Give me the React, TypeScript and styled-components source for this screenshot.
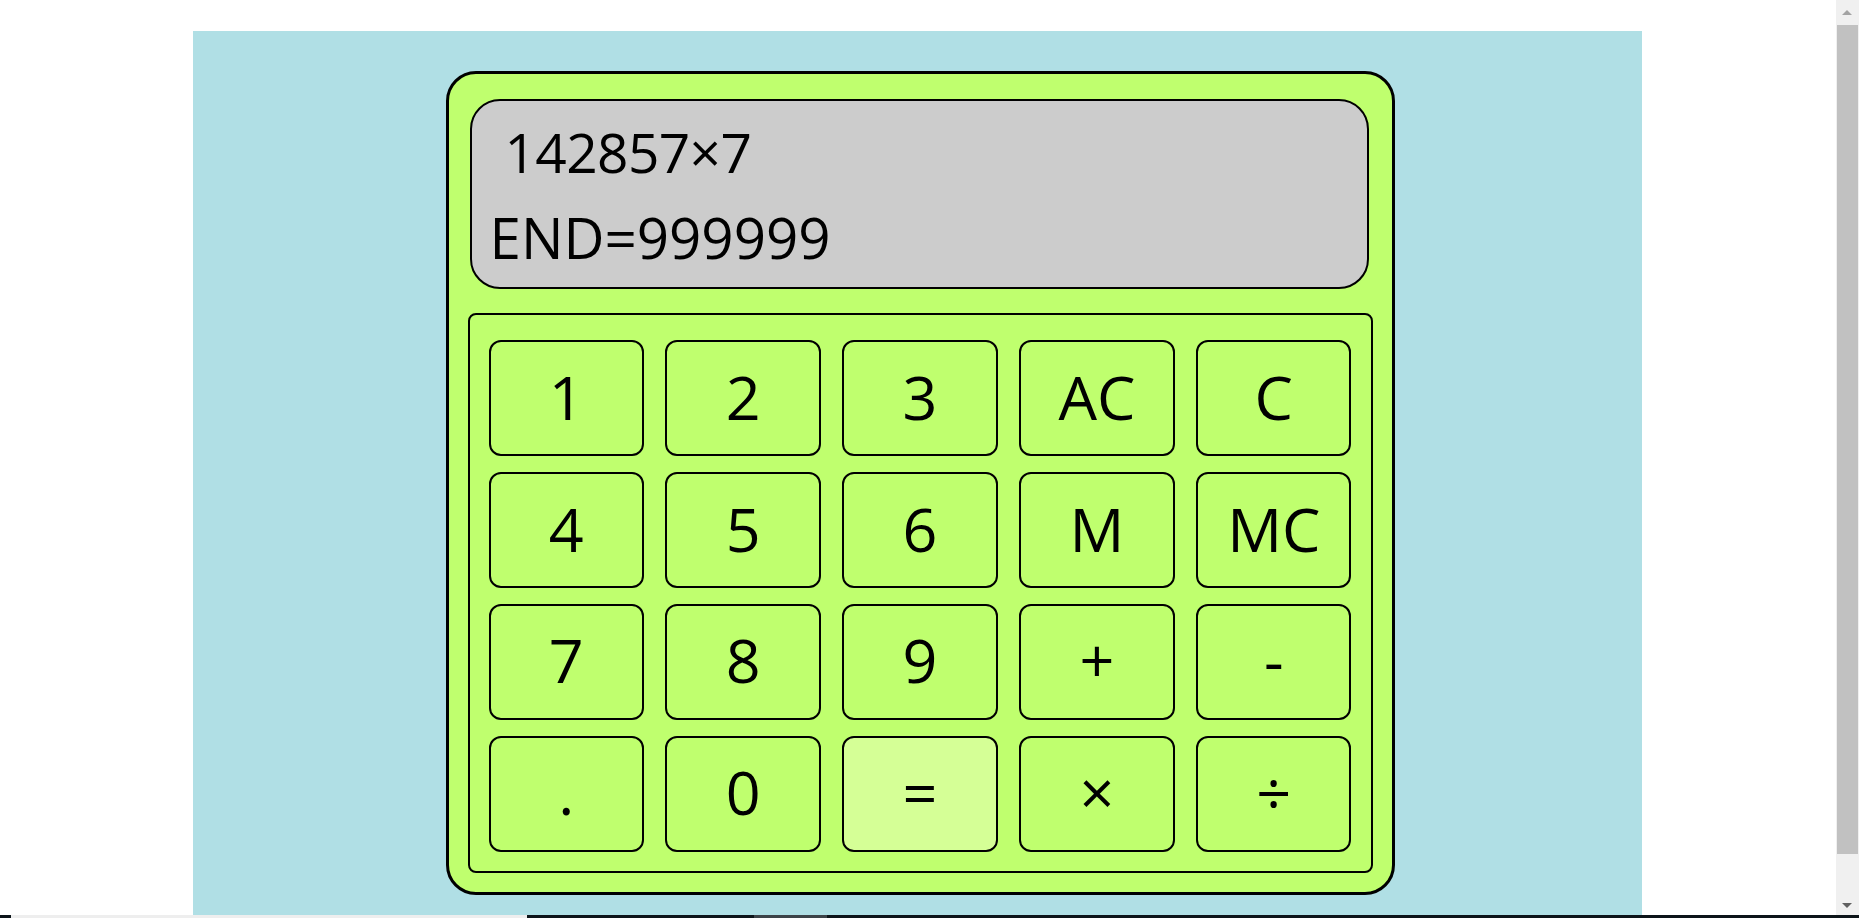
import React from "react";
import styled, { createGlobalStyle } from "styled-components";

const GlobalStyle = createGlobalStyle`
  body {
    margin: 0;
    background: #ffffff;
    font-family: "Open Sans", "Noto Sans", sans-serif;
  }
`;

const Page = styled.div`
  padding: 31px 24px 30px 0;
`;

const Stage = styled.main`
  width: 1449px;
  margin: 0 auto;
  background: #b0dfe5;
  padding: 40px 0 39px 5px;
  box-sizing: border-box;
  display: flex;
  justify-content: center;
`;

const Calculator = styled.section`
  width: 949px;
  height: 824px;
  box-sizing: border-box;
  border: 3px solid #000;
  border-radius: 30px;
  background: #bfff6e;
  padding: 25px 19px 19px;
  display: flex;
  flex-direction: column;
  gap: 24px;
`;

const Display = styled.div`
  height: 190px;
  margin: 0 4px 0 2px;
  box-sizing: border-box;
  border: 2px solid #000;
  border-radius: 30px;
  background: #cccccc;
  padding: 23px 18px;
  display: flex;
  flex-direction: column;
  gap: 31px;
`;

const Line = styled.div<{ $indent?: number; $size: number; $track?: number }>`
  font-size: ${(p) => p.$size}px;
  line-height: 55px;
  height: 55px;
  color: #000;
  letter-spacing: ${(p) => p.$track ?? 0}px;
  padding-left: ${(p) => p.$indent ?? 0}px;
  white-space: nowrap;
`;

const Keypad = styled.div`
  flex: 1;
  box-sizing: border-box;
  border: 2px solid #000;
  border-radius: 8px;
  padding: 25px 19px 19px;
  display: grid;
  grid-template-columns: repeat(5, 1fr);
  grid-template-rows: repeat(4, 1fr);
  column-gap: 21.5px;
  row-gap: 15.7px;
`;

const Key = styled.button<{ $active?: boolean }>`
  box-sizing: border-box;
  border: 2px solid #000;
  border-radius: 12px;
  background: ${(p) => (p.$active ? "#d5ff96" : "#bfff6e")};
  font-family: "Open Sans", "Noto Sans", sans-serif;
  font-size: 61px;
  line-height: 1;
  color: #000;
  padding: 0 0 4px;
  display: flex;
  align-items: center;
  justify-content: center;
  cursor: pointer;
`;

/* window chrome visible in the screenshot: vertical scrollbar + bottom strip */
const ScrollTrack = styled.div`
  position: fixed;
  top: 0;
  right: 0;
  width: 23px;
  height: 100vh;
  background: #f0f0f0;
`;

const ScrollThumb = styled.div`
  position: absolute;
  top: 25px;
  left: 1px;
  right: 1px;
  height: 829px;
  background: #c1c1c1;
`;

const Arrow = styled.div<{ $down?: boolean }>`
  position: absolute;
  left: 6px;
  width: 0;
  height: 0;
  border-left: 5.5px solid transparent;
  border-right: 5.5px solid transparent;
  ${(p) =>
    p.$down
      ? "bottom: 10px; border-top: 5px solid #606060;"
      : "top: 10px; border-bottom: 5px solid #a3a3a3;"}
`;

const BottomStrip = styled.div`
  position: fixed;
  left: 0;
  right: 0;
  bottom: 0;
  height: 3px;
  display: flex;
  background: #0c1419;
`;

const StripPart = styled.div<{ $w: number; $c: string }>`
  width: ${(p) => p.$w}px;
  background: ${(p) => p.$c};
  flex-shrink: 0;
`;

const keys = [
  "1", "2", "3", "AC", "C",
  "4", "5", "6", "M", "MC",
  "7", "8", "9", "+", "-",
  ".", "0", "=", "×", "÷",
];

export default function App() {
  return (
    <Page>
      <GlobalStyle />
      <Stage>
        <Calculator>
          <Display>
            <Line $indent={15} $size={55} $track={-0.6}>142857×7</Line>
            <Line $size={56.5}>END=999999</Line>
          </Display>
          <Keypad>
            {keys.map((k) => (
              <Key key={k} $active={k === "="}>
                {k}
              </Key>
            ))}
          </Keypad>
        </Calculator>
      </Stage>
      <ScrollTrack>
        <Arrow />
        <ScrollThumb />
        <Arrow $down />
      </ScrollTrack>
      <BottomStrip>
        <StripPart $w={11} $c="#0c1419" />
        <StripPart $w={516} $c="#eeeeee" />
        <StripPart $w={227} $c="#0c1419" />
        <StripPart $w={73} $c="#3c4348" />
      </BottomStrip>
    </Page>
  );
}
